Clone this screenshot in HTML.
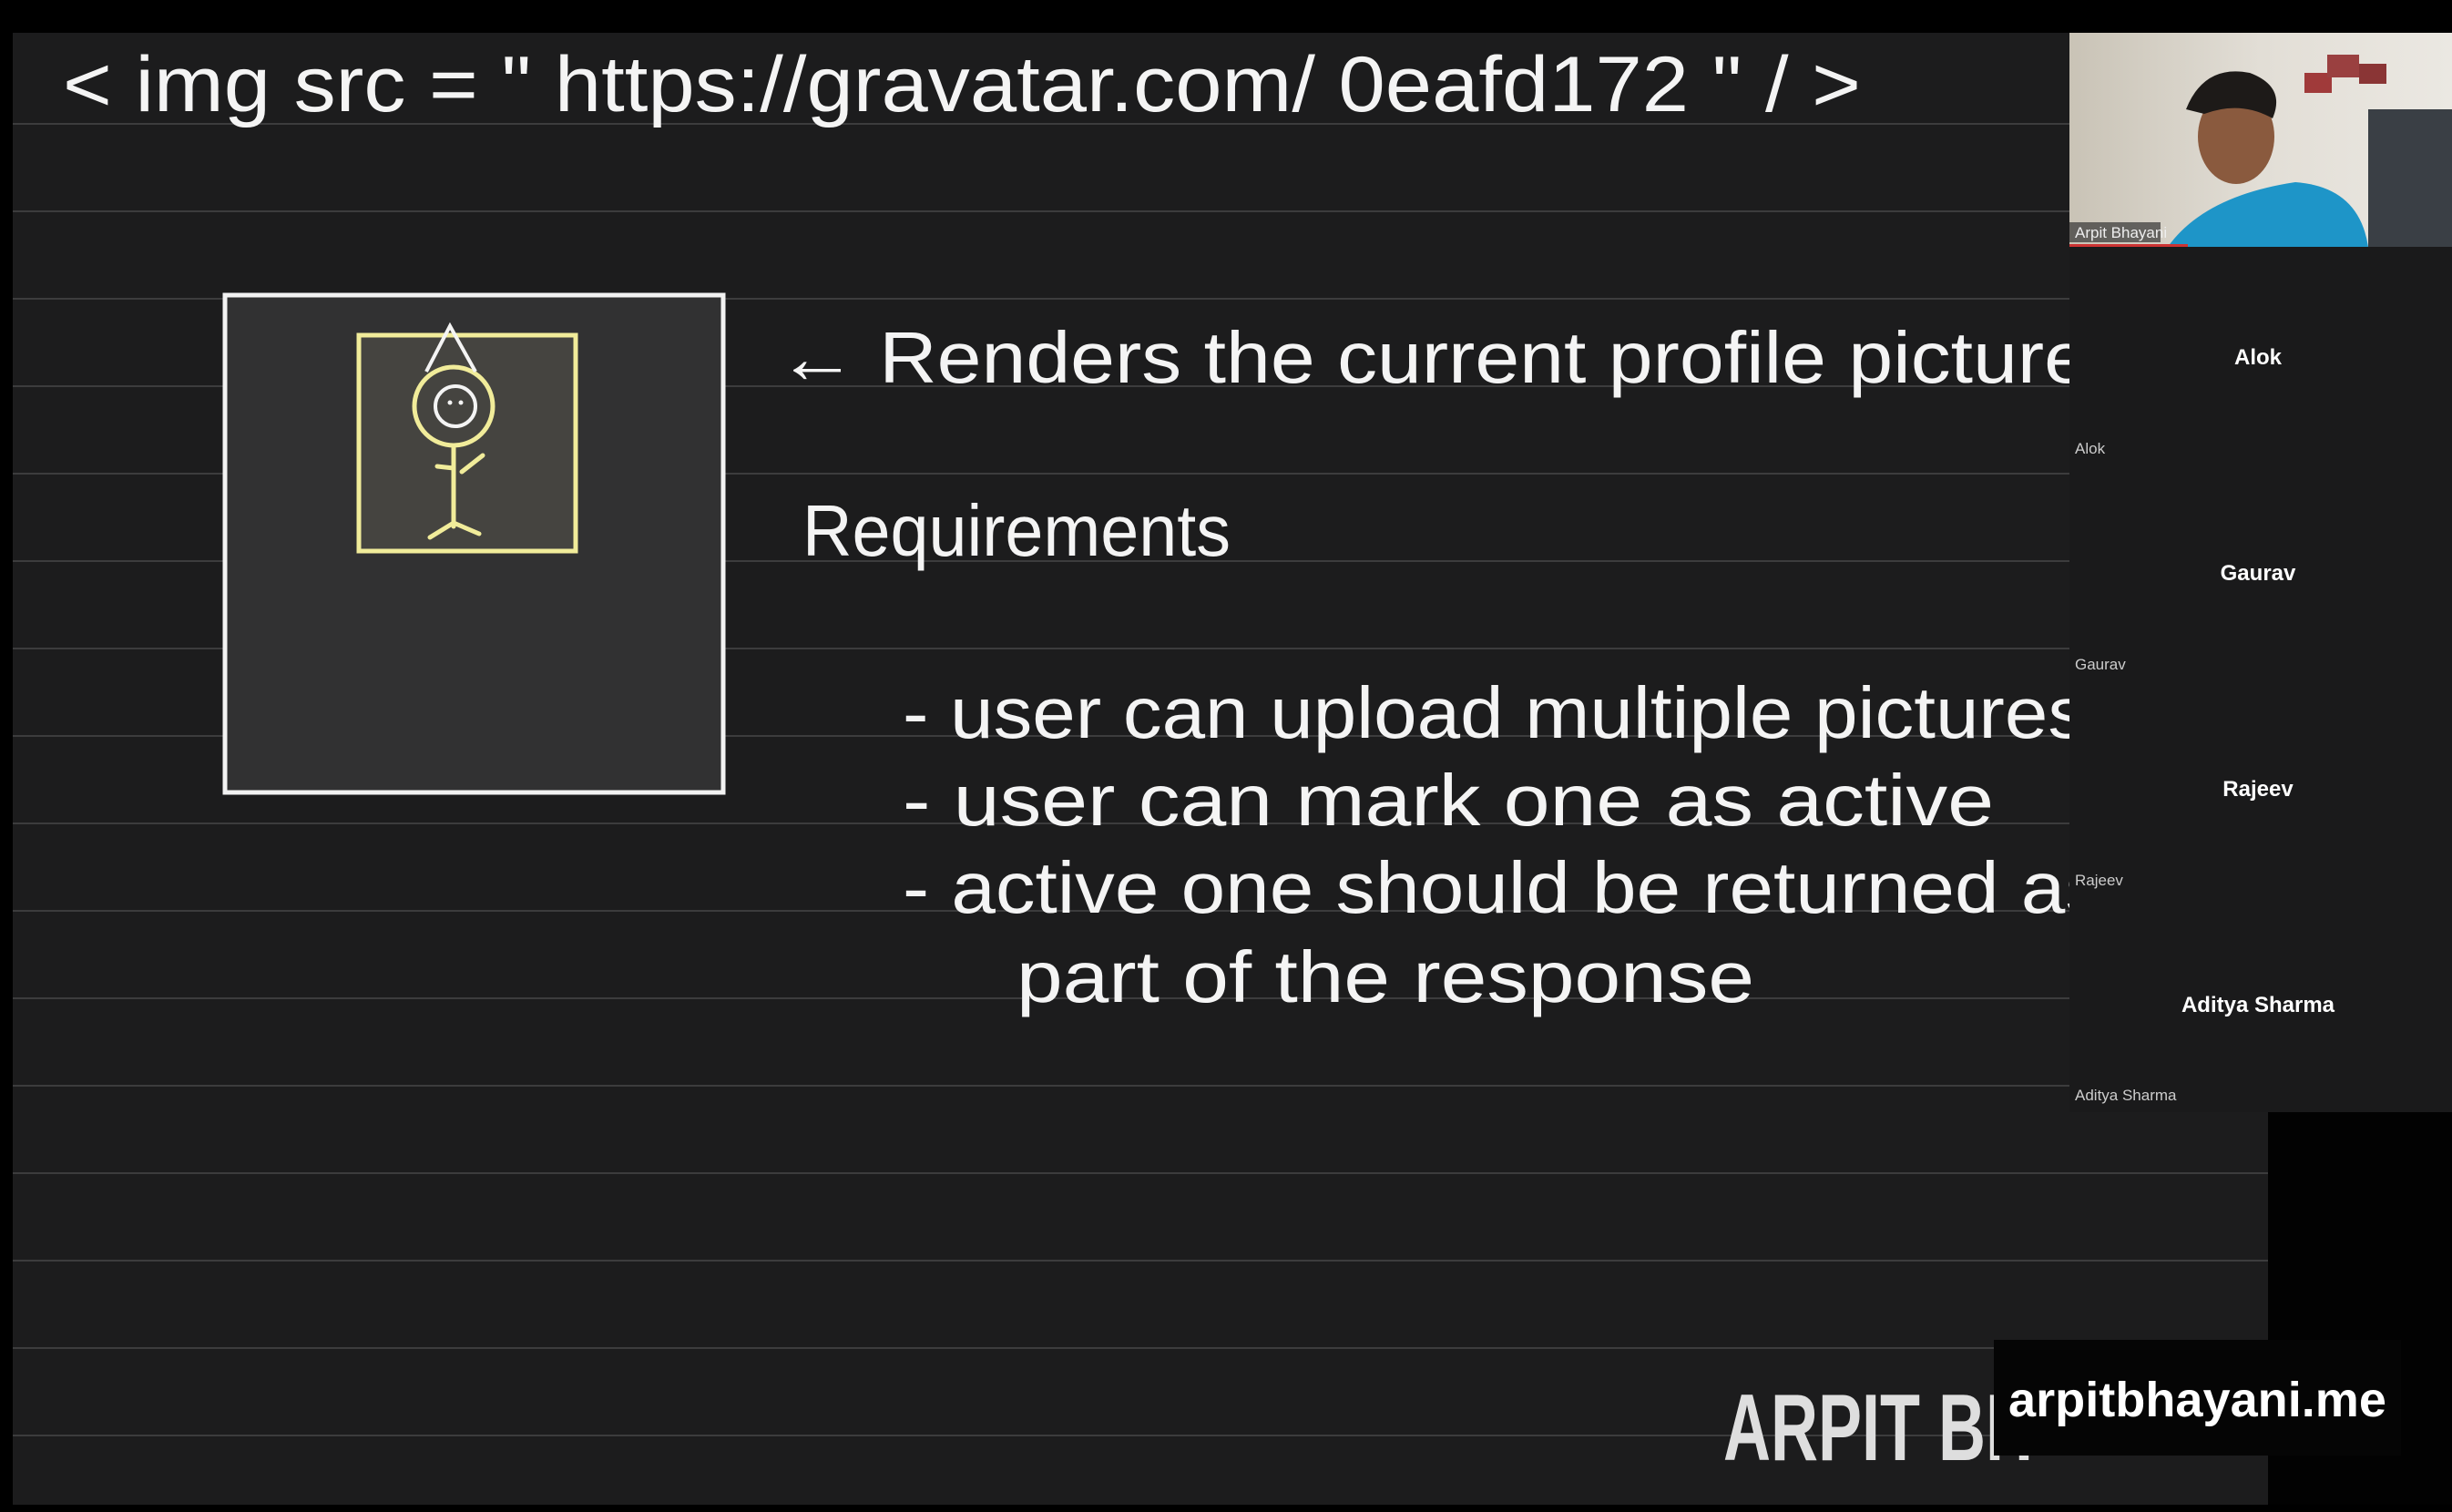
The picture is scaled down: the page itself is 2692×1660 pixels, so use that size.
<!DOCTYPE html>
<html><head><meta charset="utf-8"><style>
html,body{margin:0;padding:0;background:#000;width:2692px;height:1660px;overflow:hidden}
svg{display:block}
</style></head><body>
<svg width="2692" height="1660" viewBox="0 0 2692 1660" xmlns="http://www.w3.org/2000/svg">
<defs>
<linearGradient id="wall" x1="0" y1="0" x2="1" y2="0"><stop offset="0" stop-color="#c9c3b6"/><stop offset="0.5" stop-color="#e2ded6"/><stop offset="1" stop-color="#ebe8e2"/></linearGradient>
<clipPath id="vid"><rect x="2272" y="36" width="420" height="235"/></clipPath>
</defs>
<rect width="2692" height="1660" fill="#000"/>
<rect x="14" y="36" width="2476" height="1616" fill="#1c1c1d"/>
<g stroke="#3c3c3d" stroke-width="2">
<line x1="14" y1="136" x2="2272" y2="136"/><line x1="14" y1="232" x2="2272" y2="232"/>
<line x1="14" y1="328" x2="2272" y2="328"/><line x1="14" y1="424" x2="2272" y2="424"/>
<line x1="14" y1="520" x2="2272" y2="520"/><line x1="14" y1="616" x2="2272" y2="616"/>
<line x1="14" y1="712" x2="2272" y2="712"/><line x1="14" y1="808" x2="2272" y2="808"/>
<line x1="14" y1="904" x2="2272" y2="904"/><line x1="14" y1="1000" x2="2272" y2="1000"/>
<line x1="14" y1="1096" x2="2272" y2="1096"/><line x1="14" y1="1192" x2="2490" y2="1192"/>
<line x1="14" y1="1288" x2="2490" y2="1288"/><line x1="14" y1="1384" x2="2490" y2="1384"/>
<line x1="14" y1="1480" x2="2490" y2="1480"/><line x1="14" y1="1576" x2="2490" y2="1576"/>
</g>
<rect x="247" y="324" width="547" height="546" fill="#313132" stroke="#f2f2f2" stroke-width="5"/>
<rect x="394" y="368" width="238" height="237" fill="#454440" stroke="#f1ec9a" stroke-width="5"/>
<g fill="none" stroke="#f1ec9a" stroke-width="5" stroke-linecap="round">
<circle cx="498" cy="446" r="43"/>
<line x1="498" y1="490" x2="498" y2="578"/>
<path d="M472 590 L498 574 L526 586"/>
<path d="M507 518 L530 500"/>
<path d="M480 512 L498 514"/>
</g>
<path d="M468 408 L494 358 L522 408" fill="none" stroke="#f4f4f4" stroke-width="4"/>
<circle cx="500" cy="446" r="22" fill="none" stroke="#f4f4f4" stroke-width="4"/>
<circle cx="494" cy="442" r="2.5" fill="#f4f4f4"/><circle cx="506" cy="442" r="2.5" fill="#f4f4f4"/>
<g fill="#f4f4f4" font-family="Liberation Sans, sans-serif" font-weight="300">
<text x="69" y="122" font-size="86" textLength="1974" lengthAdjust="spacingAndGlyphs">&lt; img  src =  " https://gravatar.com/ 0eafd172 "  / &gt;</text>
<text x="853" y="420" font-size="80" textLength="1440" lengthAdjust="spacingAndGlyphs">←  Renders  the  current  profile  picture</text>
<text x="881" y="610" font-size="80" textLength="470" lengthAdjust="spacingAndGlyphs">Requirements</text>
<text x="991" y="810" font-size="80" textLength="1300" lengthAdjust="spacingAndGlyphs">-  user  can  upload  multiple  pictures</text>
<text x="991" y="906" font-size="80" textLength="1198" lengthAdjust="spacingAndGlyphs">-  user  can  mark  one  as  active</text>
<text x="991" y="1002" font-size="80" textLength="1320" lengthAdjust="spacingAndGlyphs">-  active  one  should  be  returned  as</text>
<text x="1116" y="1100" font-size="80" textLength="810" lengthAdjust="spacingAndGlyphs">part  of  the  response</text>
</g>
<rect x="2272" y="36" width="420" height="1185" fill="#1a1a1b"/>
<g clip-path="url(#vid)">
<rect x="2272" y="36" width="420" height="235" fill="url(#wall)"/>
<rect x="2600" y="120" width="92" height="151" fill="#3a3f45"/>
<rect x="2530" y="80" width="30" height="22" fill="#a03a3a"/><rect x="2555" y="60" width="35" height="25" fill="#9a4040"/><rect x="2590" y="70" width="30" height="22" fill="#8a3535"/>
<path d="M2380 271 Q2420 215 2520 200 Q2590 205 2600 271 Z" fill="#1e95c8"/>
<ellipse cx="2455" cy="150" rx="42" ry="52" fill="#8a5a3e"/>
<path d="M2400 120 Q2420 70 2470 80 Q2510 95 2495 130 Q2460 110 2420 125 Z" fill="#1d1a18"/>
<rect x="2272" y="244" width="100" height="22" fill="#333" opacity="0.7"/>
<text x="2278" y="261" font-family="Liberation Sans, sans-serif" font-size="17" fill="#eee">Arpit Bhayani</text>
<rect x="2272" y="268" width="130" height="3" fill="#c33"/>
</g>
<g fill="#fff" font-family="Liberation Sans, sans-serif" text-anchor="middle" font-weight="bold" font-size="24">
<text x="2479" y="400">Alok</text><text x="2479" y="637">Gaurav</text>
<text x="2479" y="874">Rajeev</text><text x="2479" y="1111">Aditya Sharma</text>
</g>
<g fill="#ccc" font-family="Liberation Sans, sans-serif" font-size="17">
<text x="2278" y="498">Alok</text><text x="2278" y="735">Gaurav</text>
<text x="2278" y="972">Rajeev</text><text x="2278" y="1208">Aditya Sharma</text>
</g>
<rect x="2490" y="1221" width="202" height="439" fill="#020202"/>
<text x="1892" y="1603" font-family="Liberation Sans, sans-serif" font-weight="bold" font-size="104" fill="#dedede" textLength="340" lengthAdjust="spacingAndGlyphs">ARPIT BH</text>
<rect x="2189" y="1471" width="447" height="127" fill="#050505"/>
<text x="2205" y="1555" font-family="Liberation Sans, sans-serif" font-weight="bold" font-size="54" fill="#fff" textLength="415" lengthAdjust="spacingAndGlyphs">arpitbhayani.me</text>
<rect x="0" y="1652" width="2692" height="8" fill="#000"/>
</svg>
</body></html>
